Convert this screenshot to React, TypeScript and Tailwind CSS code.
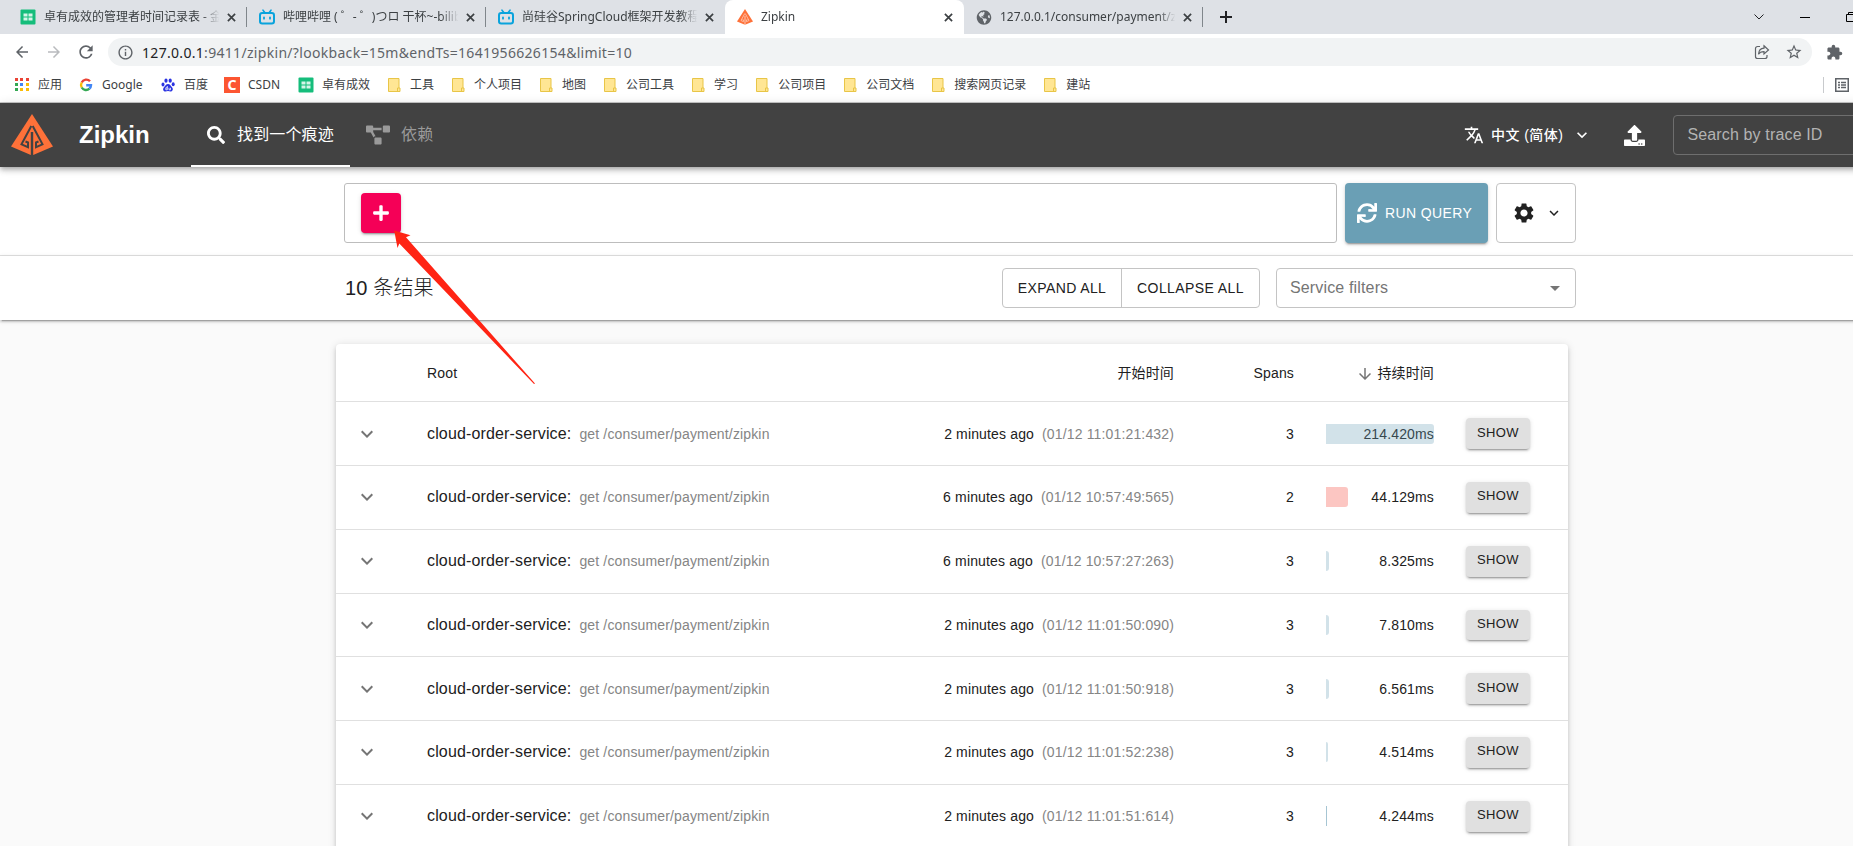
import clsx from "clsx";
import { ReactNode } from "react";
import { FaGlobeAmericas, FaPlus, FaProjectDiagram, FaSearch, FaSync, FaUpload } from "react-icons/fa";
import {
    MdArrowBack,
    MdArrowDownward,
    MdArrowDropDown,
    MdArrowForward,
    MdExpandMore,
    MdExtension,
    MdOutlineInfo,
    MdRefresh,
    MdSettings,
    MdStarBorder,
    MdTranslate,
} from "react-icons/md";

const traces = [
    { ago: "2 minutes ago", time: "(01/12 11:01:21:432)", spans: 3, duration: "214.420ms", width: 108 },
    { ago: "6 minutes ago", time: "(01/12 10:57:49:565)", spans: 2, duration: "44.129ms", width: 22, error: true },
    { ago: "6 minutes ago", time: "(01/12 10:57:27:263)", spans: 3, duration: "8.325ms", width: 3 },
    { ago: "2 minutes ago", time: "(01/12 11:01:50:090)", spans: 3, duration: "7.810ms", width: 3 },
    { ago: "2 minutes ago", time: "(01/12 11:01:50:918)", spans: 3, duration: "6.561ms", width: 3 },
    { ago: "2 minutes ago", time: "(01/12 11:01:52:238)", spans: 3, duration: "4.514ms", width: 2 },
    { ago: "2 minutes ago", time: "(01/12 11:01:51:614)", spans: 3, duration: "4.244ms", width: 1 },
];

const folders = ["工具", "个人项目", "地图", "公司工具", "学习", "公司项目", "公司文档", "搜索网页记录", "建站"];

function SheetIcon() {
    return (
        <svg viewBox="0 0 16 16" className="w-4 h-4 shrink-0">
            <rect x="0.5" y="0.5" width="15" height="15" rx="1" fill="#15bd7b" />
            <path d="M3.5 4.5h4v3h-4zM8.5 4.5h4v3h-4zM3.5 8.5h4v3h-4zM8.5 8.5h4v3h-4z" fill="#d5f5e8" />
        </svg>
    );
}

function BiliIcon() {
    return (
        <svg viewBox="0 0 16 16" className="w-4 h-4 shrink-0" fill="none" stroke="#0aa3dc" strokeLinecap="round">
            <rect x="1" y="4" width="14" height="10.5" rx="2.2" strokeWidth="2" />
            <path d="M4 1.2 5.8 3.4M12 1.2 10.2 3.4" strokeWidth="1.6" />
            <path d="M5 8.3v1.4M11 8.3v1.4" strokeWidth="1.8" />
        </svg>
    );
}

function ZipkinLogo({ className, gap }: { className?: string; gap: string }) {
    return (
        <svg viewBox="0 0 42 42" className={className}>
            <path d="M21 0 42 32.5 21 41.5 0 32.5z" fill="#fe7139" />
            <g fill="none" stroke={gap} strokeWidth="2">
                <path d="M20.300 12 10.500 30.300 17 33.200V28.500L14.500 27.500" />
                <path d="M21.700 12 31.500 30.300 25 33.200V28.500L27.500 27.500" />
                <path d="M21 18v24" strokeWidth="2.400" />
            </g>
        </svg>
    );
}

function GoogleIcon() {
    return (
        <svg viewBox="0 0 16 16" className="w-4 h-4" fill="none" strokeWidth="2.4">
            <path d="M12 4.3A5 5 0 0 0 3.7 5.5" stroke="#ea4335" />
            <path d="M3.7 5.5a5 5 0 0 0 0 5" stroke="#fbbc05" />
            <path d="M3.7 10.5a5 5 0 0 0 7.7 1.2" stroke="#34a853" />
            <path d="M11.4 11.7A5 5 0 0 0 13 8.2H8.2" stroke="#4285f4" />
        </svg>
    );
}

function BaiduIcon() {
    return (
        <svg viewBox="0 0 16 16" className="w-4 h-4" fill="#2932e1">
            <ellipse cx="3" cy="7.5" rx="1.5" ry="2" />
            <ellipse cx="6" cy="3.7" rx="1.6" ry="2.1" />
            <ellipse cx="10.2" cy="3.7" rx="1.6" ry="2.1" />
            <ellipse cx="13.2" cy="7.3" rx="1.5" ry="2" />
            <path d="M8 7c2 0 2.6 1.8 3.8 2.9 1.9 1.7 1 4.6-1.3 4.6-1 0-1.5-.4-2.5-.4s-1.6.4-2.6.4c-2.4 0-3-2.9-1.2-4.6C5.400 8.800 6 7 8 7z" />
            <path d="M7.300 9v3.800H5.800v-2h1.500M9 10.800v2h1.500v-2" fill="none" stroke="#fff" strokeWidth="0.8" />
        </svg>
    );
}

function FolderIcon() {
    return (
        <svg viewBox="0 0 16 16" className="w-4 h-4">
            <path d="M2.500 1.500h10.500v9.500h1v3.500h-11.500z" fill="#ffe694" stroke="#e8c547" />
            <path d="M11.500 14.500v-3.500h1.500" fill="none" stroke="#e8c547" />
        </svg>
    );
}

function CloseIcon() {
    return (
        <svg viewBox="0 0 10 10" className="w-[9px] h-[9px] shrink-0" stroke="#3c4043" strokeWidth="1.9">
            <path d="M1 1l8 8M9 1l-8 8" />
        </svg>
    );
}

function Tab({ icon, title, active }: { icon: ReactNode; title: string; active?: boolean }) {
    return (
        <div
            className={clsx(
                "flex h-[34px] w-[239px] shrink-0 items-center pl-[12px] pr-[11px]",
                active && "rounded-t-lg bg-white",
            )}
        >
            {icon}
            <span className="ml-2 w-[179px] overflow-hidden whitespace-nowrap text-[12px] text-[#3c4043] [mask-image:linear-gradient(to_right,black_88%,transparent_98%)]">
                {title}
            </span>
            <span className="ml-auto flex">
                <CloseIcon />
            </span>
        </div>
    );
}

function Divider() {
    return <div className="-ml-px h-5 w-px shrink-0 bg-[#80868b]" />;
}

function BrowserChrome() {
    return (
        <div className="h-[103px] border-b border-[#c9c9c9] bg-white font-['Noto_Sans','Noto_Sans_CJK_SC',sans-serif]">
            <div className="flex h-[34px] items-center bg-[#dee1e6] pl-[8px]">
                <Tab icon={<SheetIcon />} title="卓有成效的管理者时间记录表 - 金山文档" />
                <Divider />
                <Tab icon={<BiliIcon />} title="哔哩哔哩 ( ゜- ゜)つロ 干杯~-bilibili" />
                <Divider />
                <Tab icon={<BiliIcon />} title="尚硅谷SpringCloud框架开发教程" />
                <Tab icon={<ZipkinLogo className="w-4 h-4" gap="#ffd0bc" />} title="Zipkin" active />
                <Tab icon={<FaGlobeAmericas className="h-[15px] w-4 text-[#5f6368]" />} title="127.0.0.1/consumer/payment/zipkin" />
                <Divider />
                <svg viewBox="0 0 12 12" className="ml-[17px] h-3 w-3" stroke="#202124" strokeWidth="2">
                    <path d="M6 0v12M0 6h12" />
                </svg>
                <svg viewBox="0 0 10 6" className="ml-[522px] h-[6px] w-[10px]" fill="none" stroke="#202124">
                    <path d="M0.500 0.500 5 5 9.500 0.500" />
                </svg>
                <div className="ml-[36px] h-px w-[10px] bg-black" />
                <svg viewBox="0 0 10 10" className="ml-[36px] h-[10px] w-[10px]" fill="none" stroke="#000">
                    <path d="M0.500 2.500h7v7h-7zM2.500 2.500v-2h7v7h-2" />
                </svg>
            </div>
            <div className="flex h-9 items-center pl-[13px] text-[#5f6368]">
                <MdArrowBack className="h-[18px] w-[18px]" />
                <MdArrowForward className="ml-[14px] h-[18px] w-[18px] text-[#b9bbbe]" />
                <MdRefresh className="ml-[13px] h-5 w-5" />
                <div className="ml-[12px] flex h-7 w-[1704px] shrink-0 items-center rounded-full bg-[#f1f3f4] pl-[9px] pr-[9px]">
                    <MdOutlineInfo className="h-[17px] w-[17px]" />
                    <span className="ml-[8px] whitespace-nowrap text-[14px] tracking-[0.310px]">
                        <span className="text-[#202124]">127.0.0.1</span>
                        :9411/zipkin/?lookback=15m&amp;endTs=1641956626154&amp;limit=10
                    </span>
                    <svg viewBox="0 0 16 16" className="ml-auto h-4 w-4" fill="none" stroke="#5f6368" strokeWidth="1.200">
                        <path d="M6 2.500H3.500a2 2 0 0 0-2 2v8a2 2 0 0 0 2 2h7.500a2 2 0 0 0 2-2V11" />
                        <path d="M10 1.800 14.500 6 10 10V7.700C7 7.700 5.500 8.500 4.500 10.300 4.700 7 6.500 4.300 10 4.100z" />
                    </svg>
                    <MdStarBorder className="ml-[15px] h-[18px] w-[18px]" />
                </div>
                <MdExtension className="ml-[14px] h-[17px] w-[17px]" />
            </div>
            <div className="flex h-[29px] items-center gap-4 pl-[14px] text-[12px] text-[#3c4043] whitespace-nowrap">
                <div className="flex items-center gap-2">
                    <div className="grid h-4 w-4 grid-cols-3 gap-[2px] p-px">
                        <i className="h-[3px] w-[3px] bg-[#ea4335]" />
                        <i className="h-[3px] w-[3px] bg-[#ea4335]" />
                        <i className="h-[3px] w-[3px] bg-[#ea4335]" />
                        <i className="h-[3px] w-[3px] bg-[#34a853]" />
                        <i className="h-[3px] w-[3px] bg-[#4285f4]" />
                        <i className="h-[3px] w-[3px] bg-[#fbbc05]" />
                        <i className="h-[3px] w-[3px] bg-[#34a853]" />
                        <i className="h-[3px] w-[3px] bg-[#fbbc05]" />
                        <i className="h-[3px] w-[3px] bg-[#fbbc05]" />
                    </div>
                    应用
                </div>
                <div className="flex items-center gap-2">
                    <GoogleIcon />
                    <span className="w-[42px]">Google</span>
                </div>
                <div className="flex items-center gap-2">
                    <BaiduIcon />
                    百度
                </div>
                <div className="flex items-center gap-2">
                    <div className="flex h-4 w-4 items-center justify-center bg-[#fc5531] text-[14px] font-bold text-white">
                        C
                    </div>
                    <span className="w-[34px]">CSDN</span>
                </div>
                <div className="flex items-center gap-2">
                    <SheetIcon />
                    卓有成效
                </div>
                {folders.map((name) => (
                    <div key={name} className="flex items-center gap-2">
                        <FolderIcon />
                        {name}
                    </div>
                ))}
                <div className="ml-[717px] h-4 w-px bg-[#c8cacd]" />
                <svg viewBox="0 0 14 14" className="-ml-[5px] h-[14px] w-[14px]" fill="none" stroke="#5f6368">
                    <rect x="0.750" y="0.750" width="12.500" height="12.500" strokeWidth="1.500" />
                    <path d="M3 4.500h2M6 4.500h5M3 7h2M6 7h5M3 9.500h2M6 9.500h5" strokeWidth="1.300" />
                </svg>
            </div>
        </div>
    );
}

function Header() {
    return (
        <header className="relative z-20 flex h-16 bg-[#424242] text-white shadow-[0_2px_4px_-1px_rgba(0,0,0,0.2),0_4px_5px_0_rgba(0,0,0,0.14),0_1px_10px_0_rgba(0,0,0,0.12)]">
            <div className="flex w-[191px] items-center pl-[11px]">
                <ZipkinLogo className="h-[42px] w-[42px]" gap="#424242" />
                <span className="ml-[26px] text-[24px] font-bold">Zipkin</span>
            </div>
            <div className="flex w-[159px] items-center border-b-2 border-white pl-4 pt-0.5">
                <FaSearch className="h-[18px] w-[18px]" />
                <span className="ml-3 tracking-[0.150px]">找到一个痕迹</span>
            </div>
            <div className="flex items-center pl-4 text-[#9a9a9a]">
                <FaProjectDiagram className="h-5 w-6" />
                <span className="ml-[11px] tracking-[0.150px]">依赖</span>
            </div>
            <div className="ml-auto flex w-[456px] items-center">
                <MdTranslate className="h-5 w-5" />
                <span className="ml-[7px] text-[14px] font-medium tracking-[0.450px]">中文 (简体)</span>
                <MdExpandMore className="ml-[9px] h-5 w-5" />
                <FaUpload className="ml-[32px] h-[21px] w-[21px]" />
                <div className="ml-[28px] flex h-10 w-[231px] items-center rounded border border-[#6e6e6e] pl-[13px] tracking-[0.150px] text-[#b3b3b3]">
                    Search by trace ID
                </div>
            </div>
        </header>
    );
}

function SearchBar() {
    return (
        <div className="h-[89px] border-b border-[#e0e0e0] bg-white pt-4">
            <div className="mx-auto flex h-[60px] w-[1232px] gap-2">
                <div className="flex flex-1 items-center rounded-[3px] border border-[#bdbdbd] pl-4">
                    <button className="flex h-10 w-10 items-center justify-center rounded bg-[#f50057] text-white shadow-[0_3px_1px_-2px_rgba(0,0,0,0.2),0_2px_2px_0_rgba(0,0,0,0.14),0_1px_5px_0_rgba(0,0,0,0.12)]">
                        <FaPlus className="h-[18px] w-[18px]" />
                    </button>
                </div>
                <button className="flex w-[143px] items-center rounded bg-[#6a9fb5] pl-3 text-[14px] tracking-[0.400px] text-white shadow-[0_3px_1px_-2px_rgba(0,0,0,0.2),0_2px_2px_0_rgba(0,0,0,0.14),0_1px_5px_0_rgba(0,0,0,0.12)]">
                    <FaSync className="mr-2 h-5 w-5" />
                    RUN QUERY
                </button>
                <button className="flex w-20 items-center rounded border border-[#c4c4c4] pl-[15px] text-[#212121]">
                    <MdSettings className="h-6 w-6" />
                    <MdExpandMore className="ml-[9px] h-[18px] w-[18px]" />
                </button>
            </div>
        </div>
    );
}

function ResultBar() {
    return (
        <div className="relative z-10 h-16 bg-white pt-3 shadow-[0_3px_1px_-2px_rgba(0,0,0,0.2),0_2px_2px_0_rgba(0,0,0,0.14),0_1px_5px_0_rgba(0,0,0,0.12)]">
            <div className="mx-auto flex h-10 w-[1232px] items-center">
                <h6 className="pl-px text-[20px] font-light tracking-[0.150px]">10 条结果</h6>
                <div className="ml-auto flex h-10 w-[258px] rounded border border-[#c4c4c4] text-[14px] tracking-[0.400px]">
                    <button className="w-[119px] border-r border-[#c4c4c4]">EXPAND ALL</button>
                    <button className="flex-1">COLLAPSE ALL</button>
                </div>
                <div className="ml-4 flex h-10 w-[300px] items-center justify-between rounded border border-[#c4c4c4] pl-[13px] pr-2 tracking-[0.150px] text-[#757575]">
                    Service filters
                    <MdArrowDropDown className="h-6 w-6" />
                </div>
            </div>
        </div>
    );
}

function TraceRow({ trace }: { trace: (typeof traces)[number] }) {
    return (
        <div className="flex h-[63.750px] items-center border-b border-[#e0e0e0] text-[14px] leading-[20px] tracking-[0.150px]">
            <div className="w-[91px] pl-[19px]">
                <MdExpandMore className="h-6 w-6 text-[#757575]" />
            </div>
            <div className="flex items-baseline">
                <span className="text-[16px]">cloud-order-service:</span>
                <span className="ml-[8px] text-[#858585]">get /consumer/payment/zipkin</span>
            </div>
            <div className="ml-auto">
                {trace.ago}
                <span className="ml-2 text-[#858585]">{trace.time}</span>
            </div>
            <div className="w-[120px] text-right">{trace.spans}</div>
            <div className="relative ml-8 w-[108px] text-right">
                {trace.duration}
                <div
                    className={clsx(
                        "absolute inset-y-0 left-0",
                        trace.width > 1 ? "rounded-r-[3px] opacity-30" : "opacity-60",
                        trace.error ? "bg-[#f44336]" : "bg-[#6a9fb5]",
                    )}
                    style={{ width: trace.width }}
                />
            </div>
            <button className="ml-8 mr-[38px] h-[30.750px] w-16 rounded bg-[#e0e0e0] text-[13px] leading-[22px] pb-[2px] tracking-[0.370px] shadow-[0_3px_1px_-2px_rgba(0,0,0,0.2),0_2px_2px_0_rgba(0,0,0,0.14),0_1px_5px_0_rgba(0,0,0,0.12)]">
                SHOW
            </button>
        </div>
    );
}

function TraceTable() {
    return (
        <div className="w-[1904px] pt-6">
            <div className="mx-auto h-[600px] w-[1232px] rounded bg-white shadow-[0_3px_3px_-2px_rgba(0,0,0,0.2),0_3px_4px_0_rgba(0,0,0,0.14),0_1px_8px_0_rgba(0,0,0,0.12)]">
                <div className="flex h-[58.250px] items-center border-b border-[#e0e0e0] pl-[91px] pt-[2px] text-[14px] tracking-[0.150px]">
                    <span>Root</span>
                    <span className="ml-auto">开始时间</span>
                    <span className="w-[120px] text-right">Spans</span>
                    <span className="flex w-[140px] items-center justify-end">
                        <MdArrowDownward className="mr-[3px] h-[18px] w-[18px] text-[#757575]" />
                        持续时间
                    </span>
                    <span className="w-[134px]" />
                </div>
                {traces.map((trace) => (
                    <TraceRow key={trace.time} trace={trace} />
                ))}
            </div>
        </div>
    );
}

export default function App() {
    return (
        <div className="relative h-[846px] w-full overflow-hidden bg-[#fafafa] text-[#212121] font-['Liberation_Sans','Noto_Sans_CJK_SC',sans-serif]">
            <div className="w-[1920px]">
                <BrowserChrome />
                <Header />
                <SearchBar />
                <ResultBar />
                <TraceTable />
            </div>

            <svg viewBox="0 0 142 154" className="absolute left-[394px] top-[230px] z-30 h-[154px] w-[142px]">
                <path d="M0.200 0.500 16.500 5.300 12 7.300 141 153.500 140 154 5.300 13.500 3.500 18z" fill="#ff2414" />
            </svg>
        </div>
    );
}
